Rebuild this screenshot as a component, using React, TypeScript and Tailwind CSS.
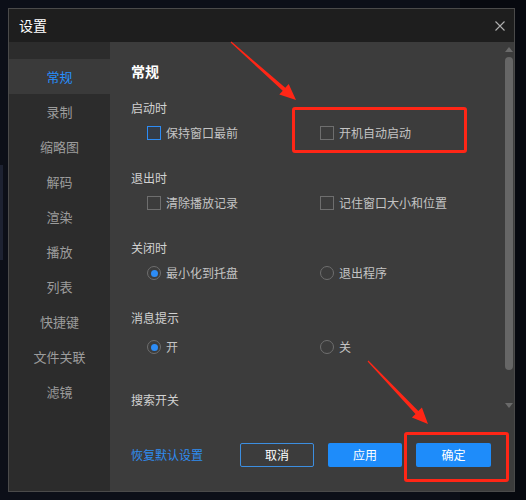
import React from "react";

const FONT = { fontFamily: '"Noto Sans CJK SC", "Noto Sans", sans-serif' };

const navItems = ["常规", "录制", "缩略图", "解码", "渲染", "播放", "列表", "快捷键", "文件关联", "滤镜"];

function CheckBox({ active = false }: { active?: boolean }) {
  return (
    <span
      className={
        active
          ? "w-[14px] h-[14px] border border-[#2d8cf5] bg-[#343c47] shrink-0"
          : "w-[14px] h-[14px] border border-[#6e6e6e] shrink-0"
      }
    />
  );
}

function Radio({ checked = false }: { checked?: boolean }) {
  return (
    <span className="w-[14px] h-[14px] rounded-full border border-[#6e6e6e] flex items-center justify-center shrink-0">
      {checked && <span className="w-[7px] h-[7px] rounded-full bg-[#2d8cf5]" />}
    </span>
  );
}

function Option({ kind, label, on }: { kind: "check" | "radio"; label: string; on?: boolean }) {
  return (
    <div className="flex items-center gap-[5px]">
      {kind === "check" ? <CheckBox active={on} /> : <Radio checked={on} />}
      <span className="text-[12px] leading-[20px] text-[#c4c4c4]">{label}</span>
    </div>
  );
}

function Row({ children }: { children: React.ReactNode }) {
  return <div className="grid grid-cols-[173px_1fr] pl-[37px] h-[20px] items-center">{children}</div>;
}

function Header({ children, className = "" }: { children: React.ReactNode; className?: string }) {
  return <div className={"text-[12px] leading-[20px] text-[#d2d2d2] " + className}>{children}</div>;
}

export default function App() {
  return (
    <div className="relative w-[526px] h-[500px] bg-[#0c0f18] overflow-hidden pt-2 pl-2" style={FONT}>
      {/* background bits behind the dialog */}
      <div className="absolute left-0 top-[165px] w-[3px] h-[95px] bg-[#1d2232]" />
      <div className="absolute right-0 top-0 w-[66px] h-[500px] bg-[#07090f]" />

      <div className="relative w-[507px] h-[484px] border border-[#4a4a4a] bg-[#3c3c3c] flex flex-col">
        {/* title bar */}
        <div className="h-[33px] bg-[#1e1e1e] flex items-center justify-between pl-[10px] pr-[9px] shrink-0">
          <span className="text-[14px] text-white">设置</span>
          <svg width="10" height="10" viewBox="0 0 10 10" className="mr-[0px]">
            <path d="M0.5 0.5L9.5 9.5M9.5 0.5L0.5 9.5" stroke="#b0b0b0" strokeWidth="1.1" />
          </svg>
        </div>

        <div className="flex flex-1 min-h-0">
          {/* sidebar */}
          <div className="w-[101px] bg-[#2c2c2c] pt-[17px] shrink-0">
            {navItems.map((n, i) => (
              <div
                key={n}
                className={
                  i === 0
                    ? "h-[35px] flex items-center justify-center text-[13px] text-[#2790ff] bg-[#3a3a3a]"
                    : "h-[35px] flex items-center justify-center text-[13px] text-[#9c9c9c]"
                }
              >
                {n}
              </div>
            ))}
          </div>

          {/* content */}
          <div className="flex-1 flex flex-col">
            <div className="flex h-[388px]">
              <div className="flex-1 pt-[19px] overflow-hidden">
                <div className="pl-[21px] text-[14px] leading-[20px] font-bold text-white">常规</div>

                <Header className="pl-[21px] mt-[17px]">启动时</Header>
                <div className="mt-[5px]">
                  <Row>
                    <Option kind="check" label="保持窗口最前" on />
                    <Option kind="check" label="开机自动启动" />
                  </Row>
                </div>

                <Header className="pl-[21px] mt-[25px]">退出时</Header>
                <div className="mt-[5px]">
                  <Row>
                    <Option kind="check" label="清除播放记录" />
                    <Option kind="check" label="记住窗口大小和位置" />
                  </Row>
                </div>

                <Header className="pl-[21px] mt-[25px]">关闭时</Header>
                <div className="mt-[5px]">
                  <Row>
                    <Option kind="radio" label="最小化到托盘" on />
                    <Option kind="radio" label="退出程序" />
                  </Row>
                </div>

                <Header className="pl-[21px] mt-[25px]">消息提示</Header>
                <div className="mt-[9px]">
                  <Row>
                    <Option kind="radio" label="开" on />
                    <Option kind="radio" label="关" />
                  </Row>
                </div>

                <Header className="pl-[21px] mt-[33px]">搜索开关</Header>
              </div>

              {/* scrollbar */}
              <div className="w-[8px] mr-[1px] flex flex-col items-center pt-[5px]">
                <svg width="8" height="5" viewBox="0 0 8 5">
                  <path d="M4 0L8 5H0Z" fill="#6a6a6a" />
                </svg>
                <div className="w-[8px] h-[313px] mt-[5px] rounded-[4px] bg-[#666666]" />
                <svg width="8" height="5" viewBox="0 0 8 5" className="mt-[33px]">
                  <path d="M0 0H8L4 5Z" fill="#6a6a6a" />
                </svg>
              </div>
            </div>

            {/* footer */}
            <div className="flex items-center pl-[21px] pr-[23px] mt-[13px] h-[24px]">
              <span className="text-[12px] text-[#2f8cf0]">恢复默认设置</span>
              <div className="ml-auto flex gap-[14px]">
                <button className="w-[74px] h-[24px] border border-[#3c8ee0] rounded-[2px] text-[12px] text-white">
                  取消
                </button>
                <button className="w-[74px] h-[24px] bg-[#1e8cfa] rounded-[2px] text-[12px] text-white">
                  应用
                </button>
                <button className="w-[75px] h-[24px] bg-[#1e8cfa] rounded-[2px] text-[12px] text-white">
                  确定
                </button>
              </div>
            </div>
          </div>
        </div>
      </div>

      {/* red annotations */}
      <div className="absolute left-[292px] top-[107px] w-[175px] h-[46px] border-[3px] border-[#ff2616] rounded-[3px]" />
      <div className="absolute left-[404px] top-[432px] w-[105px] h-[50px] border-[3px] border-[#ff2616] rounded-[3px]" />
      <svg className="absolute inset-0 pointer-events-none" width="526" height="500" viewBox="0 0 526 500">
        <polygon
          points="230.6,42.4 282.7,90.8 279.3,94.5 296,100 288.7,84.1 285.3,87.8 231.4,41.6"
          fill="#ff2616"
        />
        <polygon
          points="367.6,361.4 415.5,413.9 411.9,417.4 428,424 421.9,407.6 418.3,411.1 368.4,360.6"
          fill="#ff2616"
        />
      </svg>
    </div>
  );
}
